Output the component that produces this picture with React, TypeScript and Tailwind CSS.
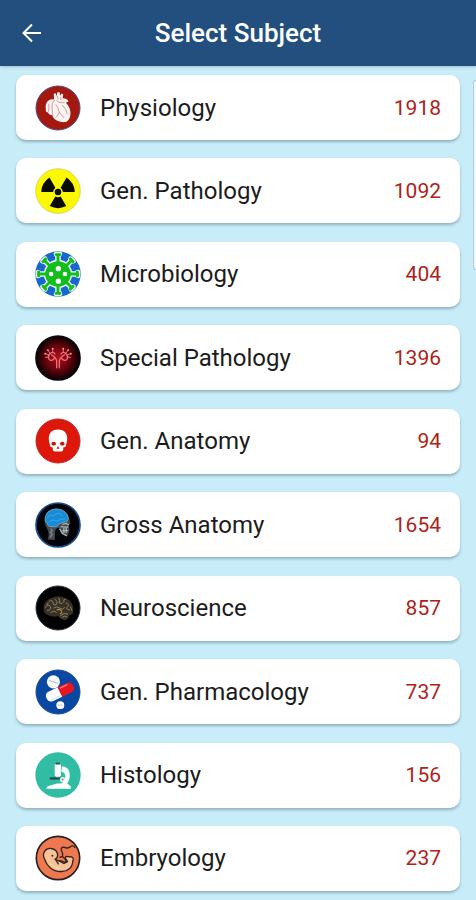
import React from 'react';

const HeartIcon = () => (
  <>
    <circle cx="70" cy="70" r="67" fill="#a3180f" stroke="#514a8c" strokeWidth="3" />
    <path
      d="M58 44 L57 27 L63 25 L66 34 L68 22 L75 22 L76 33 L81 26 L86 29 L84 40 Q98 40 102 50 L94 54 Q106 66 108 82 Q109 103 96 112 Q82 116 66 108 Q54 101 53 92 Q42 92 40 84 Q31 82 33 72 Q30 60 39 49 Q46 41 58 44Z"
      fill="#fbf3f1"
    />
    <path
      d="M59 46 Q48 56 52 72 Q54 84 53 92 M66 48 Q74 58 90 52 M64 60 Q72 70 74 84 M74 84 L66 96 M74 84 L88 100 M84 62 Q96 72 98 88 M42 58 Q44 68 41 80 M68 34 L70 44 M78 38 L79 46"
      fill="none"
      stroke="#c98a86"
      strokeWidth="2.5"
      strokeLinecap="round"
    />
  </>
);

const RadiationIcon = () => (
  <>
    <circle cx="70" cy="70" r="68" fill="#fbf900" stroke="#c9c75c" strokeWidth="2" />
    <g fill="#0b0b00">
      <path d="M55 73 L19 73 Q20 45 44 29 L62 60 Q56 64 55 73Z" />
      <path d="M85 73 L121 73 Q120 45 96 29 L78 60 Q84 64 85 73Z" />
      <path d="M62 87 L45 116 Q70 129 95 116 L78 87 Q70 91 62 87Z" />
      <circle cx="70" cy="73" r="10" />
    </g>
  </>
);

const spikes = [0, 45, 90, 135, 180, 225, 270, 315];

const VirusIcon = () => (
  <>
    <circle cx="70" cy="70" r="69" fill="#1767cf" />
    <g stroke="#f4fff4" strokeWidth="17" strokeLinecap="round">
      {spikes.map((angle) => (
        <path key={angle} d="M70 70 V16 M65 11 H75" transform={`rotate(${angle} 70 70)`} />
      ))}
    </g>
    <circle cx="70" cy="70" r="43" fill="#f4fff4" />
    <g stroke="#12bd1c" strokeWidth="9" strokeLinecap="round">
      {spikes.map((angle) => (
        <path key={angle} d="M70 70 V16 M64 11 H76" transform={`rotate(${angle} 70 70)`} />
      ))}
    </g>
    <circle cx="70" cy="70" r="39" fill="#12bd1c" />
    <g fill="#1767cf">
      {spikes.map((angle) => (
        <path key={angle} d="M70 23 L58 20 L60 5 Q70 1 80 5 L82 20Z" transform={`rotate(${angle + 22} 70 70)`} />
      ))}
    </g>
    <g fill="#fff">
      <circle cx="71" cy="54" r="8" />
      <circle cx="49" cy="70" r="7" />
      <circle cx="91" cy="70" r="7" />
      <circle cx="71" cy="92" r="8" />
    </g>
  </>
);

const KidneyIcon = () => (
  <>
    <defs>
      <radialGradient id="kidney-glow">
        <stop offset="0" stopColor="#b60b1b" />
        <stop offset="0.55" stopColor="#65040d" />
        <stop offset="1" stopColor="#090002" />
      </radialGradient>
    </defs>
    <circle cx="70" cy="70" r="67" fill="url(#kidney-glow)" stroke="#07080e" strokeWidth="5" />
    <g fill="none" stroke="#e8747c" strokeWidth="4" strokeLinecap="round">
      <path d="M66 100 V78 Q62 66 50 60 M74 100 V78 Q78 66 90 60" />
      <path d="M60 70 Q50 82 43 74 Q37 66 45 58 Q54 48 61 58 M80 70 Q90 82 97 74 Q103 66 95 58 Q86 48 79 58" />
      <path d="M47 57 L40 47 M43 62 L33 57 M43 67 L32 68 M54 53 L54 43 M93 57 L100 47 M97 62 L107 57 M97 67 L108 68 M86 53 L86 43" strokeWidth="3" />
    </g>
    <g fill="#f19aa0">
      <circle cx="39" cy="46" r="3" />
      <circle cx="31" cy="57" r="3" />
      <circle cx="54" cy="42" r="3" />
      <circle cx="101" cy="46" r="3" />
      <circle cx="109" cy="57" r="3" />
      <circle cx="86" cy="42" r="3" />
    </g>
  </>
);

const SkullIcon = () => (
  <>
    <circle cx="70" cy="70" r="67" fill="#de170b" stroke="#b92a2f" strokeWidth="3" />
    <path
      d="M70 35 C87 35 98 45 98 61 C98 69 97 74 95 79 C95 87 91 89 86 90 L86 97 Q85 102 80 102 L60 102 Q55 102 54 97 L54 90 C49 89 45 87 45 79 C43 74 42 69 42 61 C42 45 53 35 70 35Z"
      fill="#fff"
    />
    <g fill="#c7150c">
      <ellipse cx="57" cy="78" rx="7" ry="6" />
      <ellipse cx="83" cy="78" rx="7" ry="6" />
      <path d="M70 85 L75 95 L70 93 L65 95Z" />
    </g>
  </>
);

const HeadScanIcon = () => (
  <>
    <circle cx="70" cy="70" r="67" fill="#020407" stroke="#174d8c" strokeWidth="5" />
    <path d="M31 48 Q34 22 66 20 Q98 22 103 48 L108 66 L103 70 L105 86 Q103 94 98 104 L80 97 L72 78 Q60 79 61 94 L60 116 L38 114 Q46 96 36 80 Q27 66 31 48Z" fill="#454b50" />
    <path d="M31 48 Q34 24 64 21 Q97 23 101 49 Q101 62 88 61 L73 67 Q69 78 52 75 Q38 76 38 65 Q28 60 31 48Z" fill="#168bd6" stroke="#86bddd" strokeWidth="2" />
    <path d="M38 47 Q46 36 58 42 Q70 27 84 42 M43 60 Q55 50 67 58 Q79 50 91 51" fill="none" stroke="#3fa5e4" strokeWidth="3" />
    <path d="M83 68 L95 65 L103 70 M78 75 Q90 77 101 76 M83 87 L101 87 M88 79 V94 M95 79 V94 M75 82 L84 96 L97 103" fill="none" stroke="#adb3b7" strokeWidth="4" />
    <path d="M48 81 L52 87 L47 93 L52 99 L46 108" fill="none" stroke="#777d80" strokeWidth="5" />
  </>
);

const BrainIcon = () => (
  <>
    <circle cx="70" cy="70" r="67" fill="#020202" stroke="#253044" strokeWidth="3" />
    <path d="M26 74 Q24 50 48 40 Q75 27 98 42 Q119 56 116 78 Q118 91 105 91 Q101 109 84 106 Q76 103 70 94 Q53 98 40 92 Q27 88 26 74Z" fill="#373025" />
    <g fill="none" stroke="#8d8068" strokeWidth="3" strokeLinecap="round">
      <path d="M32 68 Q40 54 47 66 Q51 76 38 78 M44 49 Q54 44 55 54 Q55 64 65 59 Q72 51 62 44 M72 40 Q79 47 73 54 Q83 61 88 50 Q85 43 92 44" />
      <path d="M95 55 Q106 58 99 66 Q91 73 105 76 M48 83 Q59 75 65 83 M57 70 Q66 63 75 70 Q84 78 90 69 M78 93 Q88 83 100 88 M83 98 Q91 91 97 97 M36 60 L40 54 M108 66 L112 77" />
    </g>
    <path d="M66 77 Q75 70 82 80 M76 88 L83 83" fill="none" stroke="#b58a46" strokeWidth="4" />
  </>
);

const PillsIcon = () => (
  <>
    <circle cx="70" cy="70" r="67" fill="#0848a3" stroke="#174b91" strokeWidth="3" />
    <circle cx="56" cy="39" r="20" fill="#f7f8fa" />
    <path d="M42 35 L69 43" stroke="#b6bbc2" strokeWidth="3" />
    <g transform="rotate(-25 76 70)">
      <path d="M76 54 H46 Q31 54 31 70 Q31 86 46 86 H76Z" fill="#fff" />
      <path d="M76 54 H106 Q121 54 121 70 Q121 86 106 86 H76Z" fill="#e91520" />
      <path d="M81 59 H106" stroke="#ff747a" strokeWidth="4" />
      <path d="M42 81 H76" stroke="#dce2e9" strokeWidth="3" />
    </g>
    <circle cx="77" cy="110" r="12" fill="#fff" />
    <path d="M69 109 L85 111" stroke="#c4c7cc" strokeWidth="3" />
  </>
);

const MicroscopeIcon = () => (
  <>
    <circle cx="70" cy="70" r="69" fill="#31bda4" />
    <path d="M82 43 Q106 45 106 70 Q106 86 96 99 H77 Q93 88 92 73 Q91 61 80 60Z" fill="#effffd" />
    <rect x="60" y="37" width="19" height="36" rx="2" fill="#fff" />
    <rect x="63" y="32" width="13" height="6" fill="#245e60" />
    <rect x="63" y="73" width="13" height="5" fill="#d5eae8" />
    <path d="M45 77 H78 V84 H45Z" fill="#264f55" />
    <circle cx="84" cy="84" r="8" fill="#e1f4f1" />
    <circle cx="84" cy="84" r="3" fill="#ca6c69" />
    <path d="M34 112 Q35 104 43 103 L68 96 H98 L109 105 V112Z" fill="#fff" />
  </>
);

const EmbryoIcon = () => (
  <>
    <circle cx="70" cy="70" r="66" fill="#ee7850" stroke="#282020" strokeWidth="5" />
    <path
      d="M29 73 C20 55 32 39 49 41 C61 42 70 51 69 63 Q68 70 62 74 Q70 80 80 79 L90 83 L98 79 L92 70 L94 65 L112 67 Q119 70 115 79 C114 99 100 112 79 111 C53 112 36 94 29 73Z"
      fill="#f6c397"
      stroke="#342420"
      strokeWidth="4"
      strokeLinejoin="round"
    />
    <path d="M76 68 Q85 62 91 73 L96 80 M72 78 L88 87 L99 81 M61 73 L71 88" fill="none" stroke="#342420" strokeWidth="4" strokeLinecap="round" />
    <path d="M84 64 Q86 55 80 47 Q78 37 88 37 Q98 42 106 37 Q115 29 121 38" fill="none" stroke="#342420" strokeWidth="4" strokeLinecap="round" />
    <circle cx="53" cy="63" r="3" fill="#342420" />
    <path d="M45 86 Q60 101 77 103" fill="none" stroke="#fbdcb9" strokeWidth="3" />
  </>
);

const subjects = [
  { name: 'Physiology', count: 1918, icon: HeartIcon },
  { name: 'Gen. Pathology', count: 1092, icon: RadiationIcon },
  { name: 'Microbiology', count: 404, icon: VirusIcon },
  { name: 'Special Pathology', count: 1396, icon: KidneyIcon },
  { name: 'Gen. Anatomy', count: 94, icon: SkullIcon },
  { name: 'Gross Anatomy', count: 1654, icon: HeadScanIcon },
  { name: 'Neuroscience', count: 857, icon: BrainIcon },
  { name: 'Gen. Pharmacology', count: 737, icon: PillsIcon },
  { name: 'Histology', count: 156, icon: MicroscopeIcon },
  { name: 'Embryology', count: 237, icon: EmbryoIcon },
];

const App = () => {
  return (
    <div className="relative min-h-screen flex flex-col bg-[#c8edf9] font-[Roboto,sans-serif]">
      {/* Header */}
      <header className="grid grid-cols-[64px_1fr_64px] items-center h-[66px] bg-[#224f7e] text-white shadow-[0_1px_3px_rgba(0,0,0,0.2)]">
        <button type="button" aria-label="Back" className="flex items-center justify-center h-full">
          <svg viewBox="0 0 20 20" className="size-5" fill="none" stroke="currentColor" strokeWidth="2">
            <path d="M19 10 H2 M10 1.5 L1.5 10 L10 18.5" />
          </svg>
        </button>
        <h1 className="text-center text-[26px] leading-8 font-medium">Select Subject</h1>
      </header>

      {/* Subject list */}
      <main className="flex-grow flex flex-col">
        <ul className="flex-grow flex flex-col justify-between gap-4 px-4 py-[9px]">
          {subjects.map(({ name, count, icon: Icon }) => (
            <li key={name}>
              <button
                type="button"
                className="w-full h-[65px] flex items-center gap-[19px] px-[19px] rounded-[10px] bg-white text-left shadow-[0_2px_3px_rgba(60,90,100,0.4)]"
              >
                <svg viewBox="0 0 140 140" className="size-[46px] shrink-0" aria-hidden="true">
                  <Icon />
                </svg>
                <span className="flex-grow text-2xl text-[#1c1c1c]">{name}</span>
                <span className="text-[21px] leading-7 text-[#ad2318]">{count}</span>
              </button>
            </li>
          ))}
        </ul>
      </main>

      {/* Scroll thumb */}
      <div className="absolute right-0 top-20 w-[3px] h-[190px] rounded-l-sm border border-r-0 border-[#b3cdd8] bg-[#f1f7fa]" />
    </div>
  );
};

export default App;
